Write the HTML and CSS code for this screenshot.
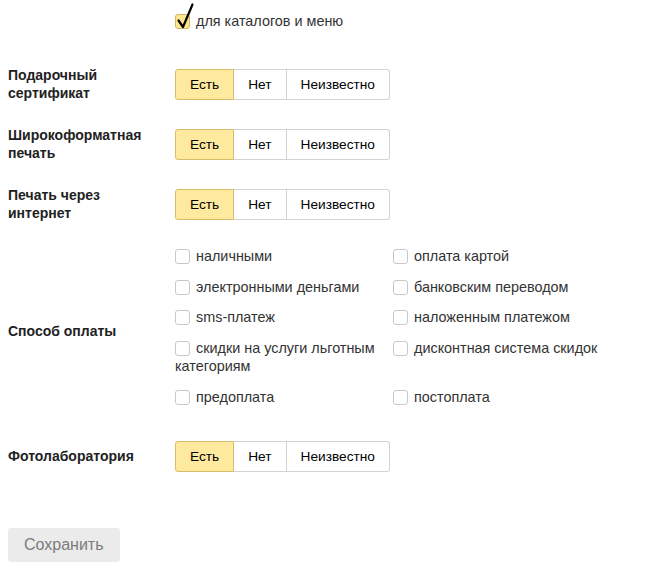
FILE: index.html
```html
<!DOCTYPE html>
<html lang="ru">
<head>
<meta charset="utf-8">
<title>Параметры организации</title>
<link rel="stylesheet" href="styles.css">
</head>
<body>
<form class="form">
  <div class="row row-top">
    <div class="label"></div>
    <div class="control">
      <label class="check">
        <span class="box box-on">
          <svg class="tick" width="18" height="26" viewBox="0 0 18 26"><path d="M2.5 17.5 L7 24 L16.5 1.5" fill="none" stroke="#000" stroke-width="2.2" stroke-linecap="round" stroke-linejoin="round"/></svg>
        </span>для каталогов и меню
      </label>
    </div>
  </div>

  <div class="row">
    <div class="label">Подарочный сертификат</div>
    <div class="control">
      <div class="seg">
        <span class="seg-item seg-on">Есть</span><span class="seg-item">Нет</span><span class="seg-item">Неизвестно</span>
      </div>
    </div>
  </div>

  <div class="row">
    <div class="label">Широкоформатная печать</div>
    <div class="control">
      <div class="seg">
        <span class="seg-item seg-on">Есть</span><span class="seg-item">Нет</span><span class="seg-item">Неизвестно</span>
      </div>
    </div>
  </div>

  <div class="row row-last">
    <div class="label">Печать через интернет</div>
    <div class="control">
      <div class="seg">
        <span class="seg-item seg-on">Есть</span><span class="seg-item">Нет</span><span class="seg-item">Неизвестно</span>
      </div>
    </div>
  </div>

  <div class="row row-pay">
    <div class="label">Способ оплаты</div>
    <div class="control">
      <div class="pay-grid">
        <label class="check"><span class="box"></span>наличными</label>
        <label class="check"><span class="box"></span>оплата картой</label>
        <label class="check"><span class="box"></span>электронными деньгами</label>
        <label class="check"><span class="box"></span>банковским переводом</label>
        <label class="check"><span class="box"></span>sms-платеж</label>
        <label class="check"><span class="box"></span>наложенным платежом</label>
        <label class="check"><span class="box"></span>скидки на услуги льготным категориям</label>
        <label class="check"><span class="box"></span>дисконтная система скидок</label>
        <label class="check"><span class="box"></span>предоплата</label>
        <label class="check"><span class="box"></span>постоплата</label>
      </div>
    </div>
  </div>

  <div class="row row-photo">
    <div class="label">Фотолаборатория</div>
    <div class="control">
      <div class="seg">
        <span class="seg-item seg-on">Есть</span><span class="seg-item">Нет</span><span class="seg-item">Неизвестно</span>
      </div>
    </div>
  </div>

  <div class="actions">
    <button type="button" class="save">Сохранить</button>
  </div>
</form>
</body>
</html>
```

FILE: styles.css
```css
body {
  margin: 0;
  padding: 0 8px;
  font-family: "Liberation Sans", Arial, sans-serif;
  font-size: 14px;
  color: #333;
  background: #fff;
}

.form {
  display: flex;
  flex-direction: column;
}

.row {
  display: grid;
  grid-template-columns: 150px 1fr;
  column-gap: 17px;
  align-items: center;
  margin-bottom: 24px;
}

.row-top {
  padding-top: 12px;
  margin-bottom: 36px;
}

.row-last {
  margin-bottom: 25px;
}

.row-pay {
  margin-bottom: 35px;
}

.row-pay .label {
  padding-top: 9px;
}

.row-photo {
  margin-bottom: 56px;
}

.label {
  font-weight: bold;
  font-size: 14px;
  line-height: 18px;
  color: #222;
}

/* checkboxes */
.check {
  display: block;
  font-size: 14.4px;
  line-height: 18px;
  color: #333;
}

.box {
  position: relative;
  display: inline-block;
  box-sizing: border-box;
  width: 15px;
  height: 15px;
  margin-right: 6px;
  border: 1px solid #c8c8c8;
  border-radius: 3px;
  background: #fff;
  vertical-align: -3px;
}

.box-on {
  background: #fde68f;
  border-color: #cfb766;
}

.tick {
  position: absolute;
  left: 0;
  top: -12px;
}

.pay-grid {
  display: grid;
  grid-template-columns: 205px 1fr;
  column-gap: 13px;
  row-gap: 12.7px;
}

/* segmented yes/no switch */
.seg {
  display: inline-flex;
  height: 31px;
  box-sizing: border-box;
  border-radius: 3px;
}

.seg-item {
  display: flex;
  align-items: center;
  box-sizing: border-box;
  padding: 0 14px;
  border: 1px solid #d3d3d3;
  border-left: none;
  background: #fff;
  color: #000;
  font-size: 13.7px;
}

.seg-item:first-child {
  border-left: 1px solid #d3d3d3;
  border-radius: 3px 0 0 3px;
}

.seg-item:last-child {
  border-radius: 0 3px 3px 0;
}

.seg-item.seg-on {
  background: #feea9f;
  border-color: #d6bd6a;
}

.actions {
  display: flex;
}

.save {
  font-family: "Liberation Sans", Arial, sans-serif;
  font-size: 16px;
  color: #7b7b7b;
  background: #ebebeb;
  border: none;
  border-radius: 3px;
  height: 34px;
  padding: 0 16px;
  cursor: default;
}
```
